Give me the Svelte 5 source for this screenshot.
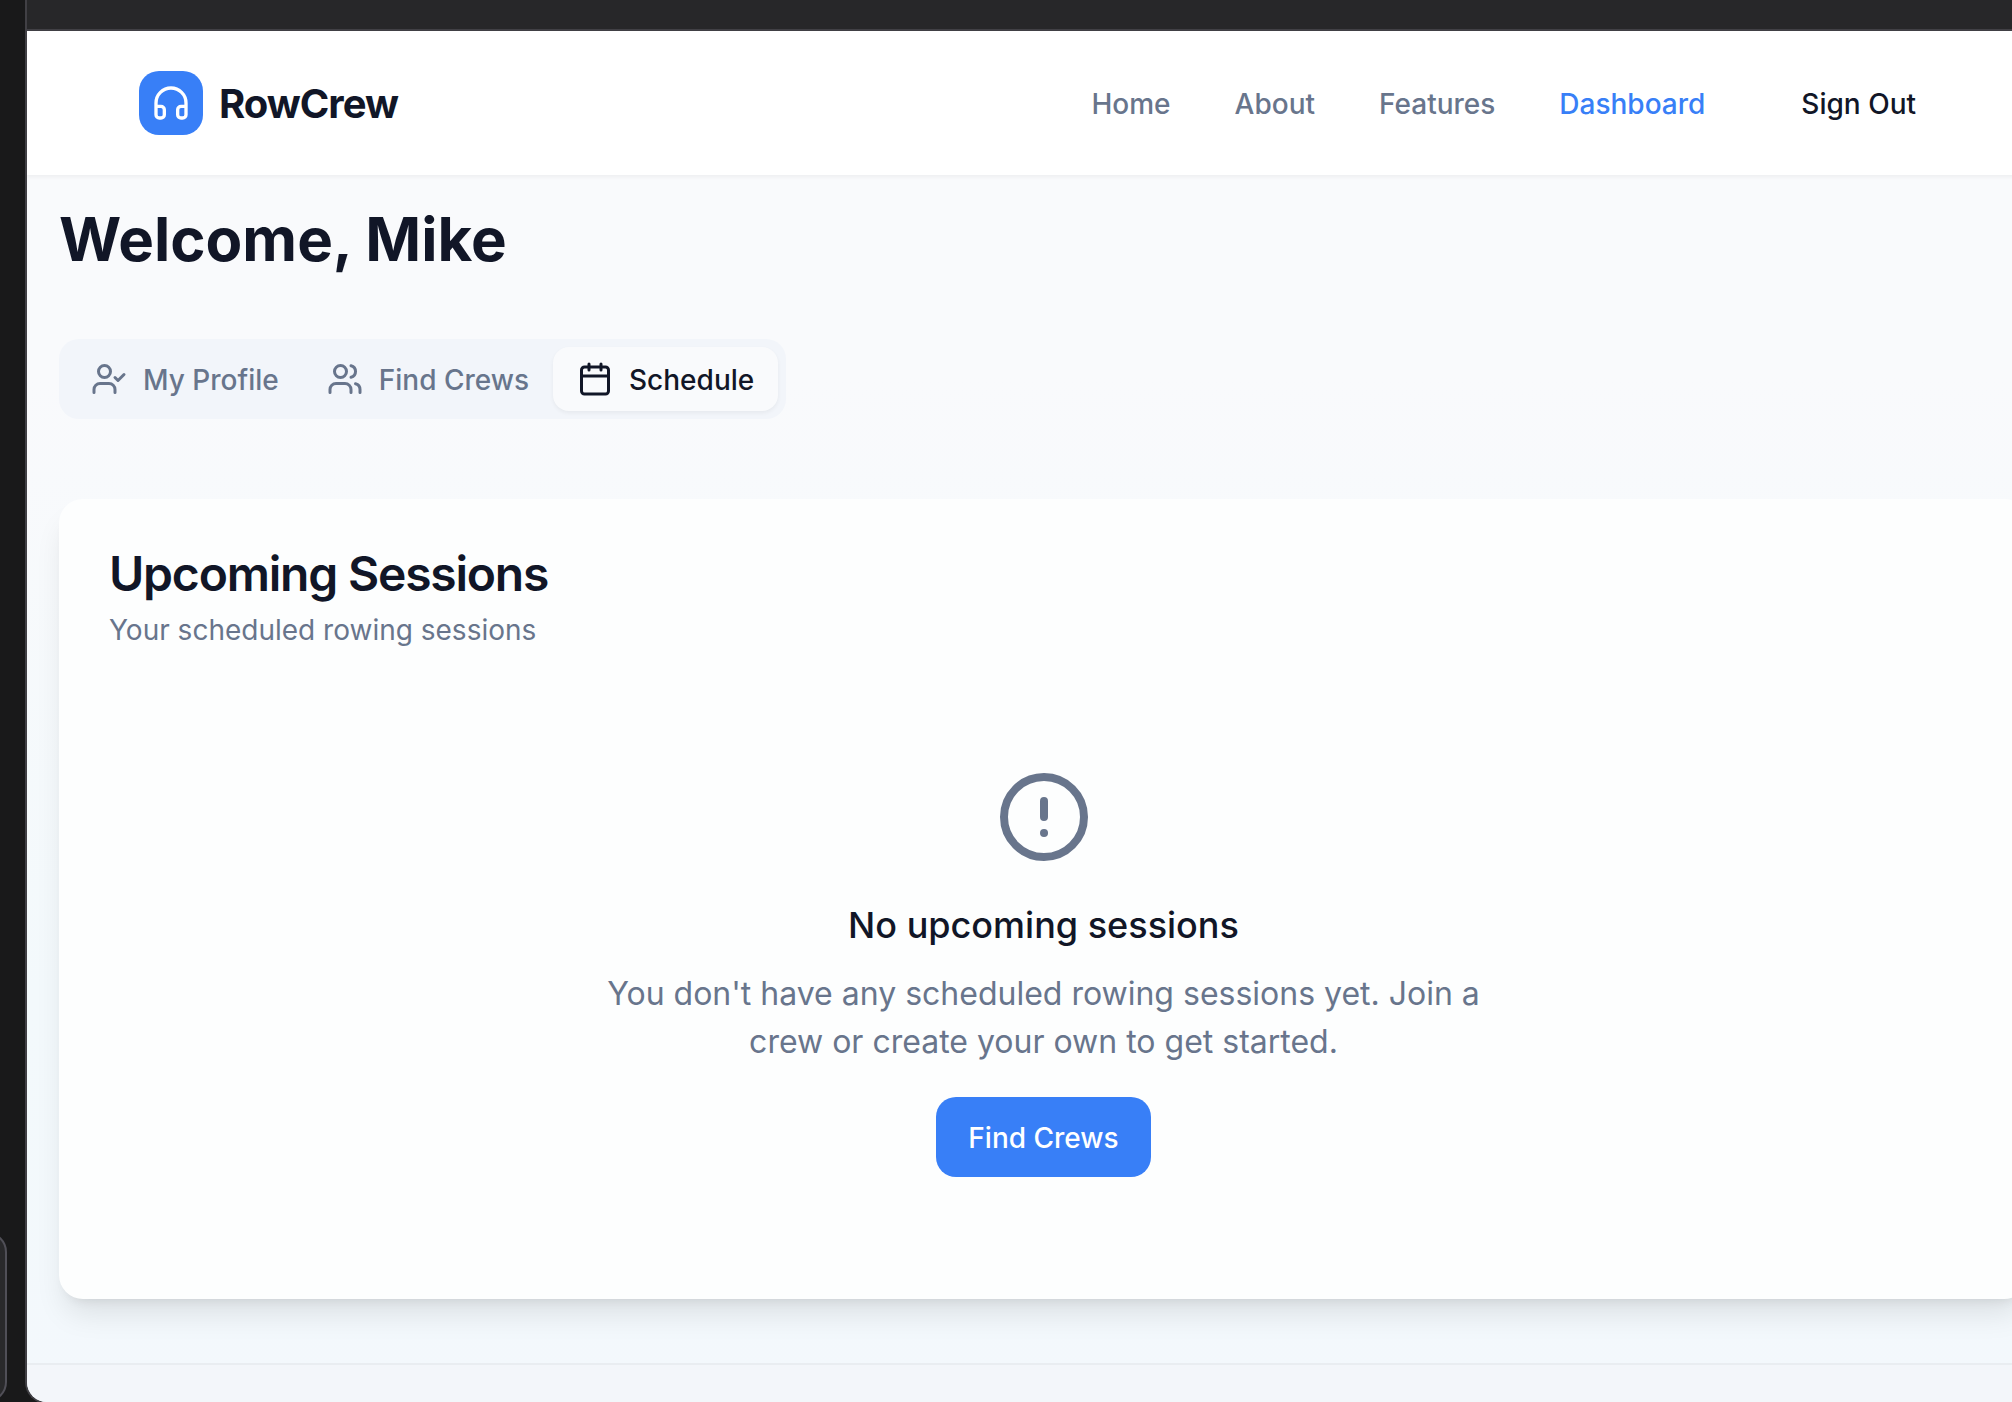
<script>
  const links = ['Home', 'About', 'Features', 'Dashboard'];
  const tabs = [
    { id: 'profile', label: 'My Profile' },
    { id: 'crews', label: 'Find Crews' },
    { id: 'schedule', label: 'Schedule' },
  ];
  let current = $state('schedule');
</script>

<div class="desktop">
  <div class="rail"><div class="handle"></div></div>
  <div class="shell">
    <div class="topbar"></div>
    <div class="page">
      <header>
        <div class="brand">
          <span class="logo">
            <svg viewBox="0 0 24 24" width="40" height="40">
              <path d="M3 14h3a2 2 0 0 1 2 2v3a2 2 0 0 1-2 2H5a2 2 0 0 1-2-2v-7a9 9 0 0 1 18 0v7a2 2 0 0 1-2 2h-1a2 2 0 0 1-2-2v-3a2 2 0 0 1 2-2h3" />
            </svg>
          </span>
          <span class="name">RowCrew</span>
        </div>
        <nav>
          {#each links as link}
            <span class="link" class:on={link === 'Dashboard'}>{link}</span>
          {/each}
          <button class="signout">Sign Out</button>
        </nav>
      </header>

      <main>
        <h1>Welcome, Mike</h1>
        <div class="tabs">
          {#each tabs as tab}
            <button class="tab" class:active={current === tab.id} onclick={() => (current = tab.id)}>
              <svg viewBox="0 0 24 24" width="36" height="36">
                {#if tab.id === 'profile'}
                  <path d="m16 11 2 2 4-4" />
                  <path d="M16 21v-2a4 4 0 0 0-4-4H6a4 4 0 0 0-4 4v2" />
                  <circle cx="9" cy="7" r="4" />
                {:else if tab.id === 'crews'}
                  <path d="M16 21v-2a4 4 0 0 0-4-4H6a4 4 0 0 0-4 4v2" />
                  <circle cx="9" cy="7" r="4" />
                  <path d="M22 21v-2a4 4 0 0 0-3-3.87" />
                  <path d="M16 3.13a4 4 0 0 1 0 7.75" />
                {:else}
                  <path d="M8 2v4M16 2v4M3 10h18" />
                  <rect width="18" height="18" x="3" y="4" rx="2" />
                {/if}
              </svg>
              <span class="label">{tab.label}</span>
            </button>
          {/each}
        </div>

        <section class="card">
          <h2>Upcoming Sessions</h2>
          <p class="sub">Your scheduled rowing sessions</p>
          <div class="empty">
            <svg viewBox="0 0 24 24" width="96" height="96">
              <circle cx="12" cy="12" r="10" />
              <path d="M12 8v4M12 16h.01" />
            </svg>
            <h3>No upcoming sessions</h3>
            <p>You don't have any scheduled rowing sessions yet. Join a crew or create your own to get started.</p>
            <button class="primary">Find Crews</button>
          </div>
        </section>
      </main>
      <footer></footer>
    </div>
  </div>
</div>

<style>
  :global(body) { background: #19191a; overflow: hidden; }
  * { box-sizing: border-box; }
  h1, h2, h3, p { margin: 0; }
  button { border: 0; background: none; padding: 0; font: inherit; color: inherit; white-space: nowrap; }
  svg { fill: none; stroke: currentColor; stroke-width: 2; stroke-linecap: round; stroke-linejoin: round; flex: none; }
  .desktop {
    width: 2012px; height: 1402px; overflow: hidden; display: flex;
    background: #19191a; color: #111627;
    font-family: Inter, sans-serif; font-size: 28px; line-height: 40px;
  }
  .rail { flex: none; width: 25px; display: flex; flex-direction: column; justify-content: flex-end; }
  .handle { width: 40px; height: 170px; margin-left: -33px; border: 2px solid #504f57; border-radius: 20px; background: #29292b; }
  .shell {
    flex: none; width: 2037px; height: 1404px; display: flex; flex-direction: column;
    border-left: 2px solid #414045; border-bottom: 2px solid #414045;
    border-radius: 0 0 0 22px; overflow: hidden;
  }
  .topbar { flex: none; height: 31px; background: #272729; border-bottom: 2px solid #414045; }
  .page { flex: 1; display: flex; flex-direction: column; width: 2033px; background: linear-gradient(#f9fafc, #f9fafc 25%, #f3f9fc 70%, #f3f8fc); }
  header {
    flex: none; height: 144px; padding: 0 112px; display: flex; align-items: center; justify-content: space-between;
    background: #fff; box-shadow: 0 2px 4px rgba(0, 0, 0, .05);
  }
  .brand { display: flex; align-items: center; gap: 16px; }
  .logo { width: 64px; height: 64px; border-radius: 20px; background: #387ff7; color: #fff; display: grid; place-items: center; }
  .name { padding-top: 2px; font-size: 40px; line-height: 56px; font-weight: 700; letter-spacing: -1px; }
  nav { padding-top: 2px; display: flex; align-items: center; gap: 64px; font-weight: 500; }
  .link { color: #68758c; }
  .link.on { color: #387ff7; }
  .signout { padding: 0 32px; }
  main { flex: none; height: 1188px; padding: 28px 32px 0; display: flex; flex-direction: column; align-items: flex-start; }
  h1 { font-size: 60px; line-height: 72px; font-weight: 700; }
  .tabs { margin-top: 64px; height: 80px; padding: 8px; border-radius: 20px; background: #f2f5fa; display: flex; }
  .tab { height: 64px; padding: 0 24px; border-radius: 16px; display: flex; align-items: center; gap: 16px; font-weight: 500; color: #68758c; }
  .tab.active { color: #111627; background: #f9fafc; box-shadow: 0 2px 4px rgba(0, 0, 0, .05); }
  .label { padding-top: 2px; }
  .card {
    align-self: stretch; margin-top: 80px; height: 800px; padding: 51px 50px 49px; border-radius: 24px; background: #fdfefe;
    box-shadow: 0 20px 30px -6px rgba(0, 0, 0, .1), 0 8px 12px -8px rgba(0, 0, 0, .1);
  }
  h2 { font-size: 48px; line-height: 48px; font-weight: 600; letter-spacing: -1.2px; }
  .sub { margin-top: 12px; color: #68758c; }
  .empty { margin-top: 119px; display: flex; flex-direction: column; align-items: center; text-align: center; color: #68758c; }
  h3 { margin-top: 32px; font-size: 36px; line-height: 56px; font-weight: 500; color: #111627; }
  .empty p { margin-top: 17px; width: 896px; font-size: 32px; line-height: 48px; }
  .primary { margin-top: 31px; height: 80px; padding: 2px 32px 0; border-radius: 20px; background: #387ff7; color: #fff; font-weight: 500; }
  footer { flex: 1; border-top: 2px solid #e9edf1; background: #f3f6fa; }
</style>
